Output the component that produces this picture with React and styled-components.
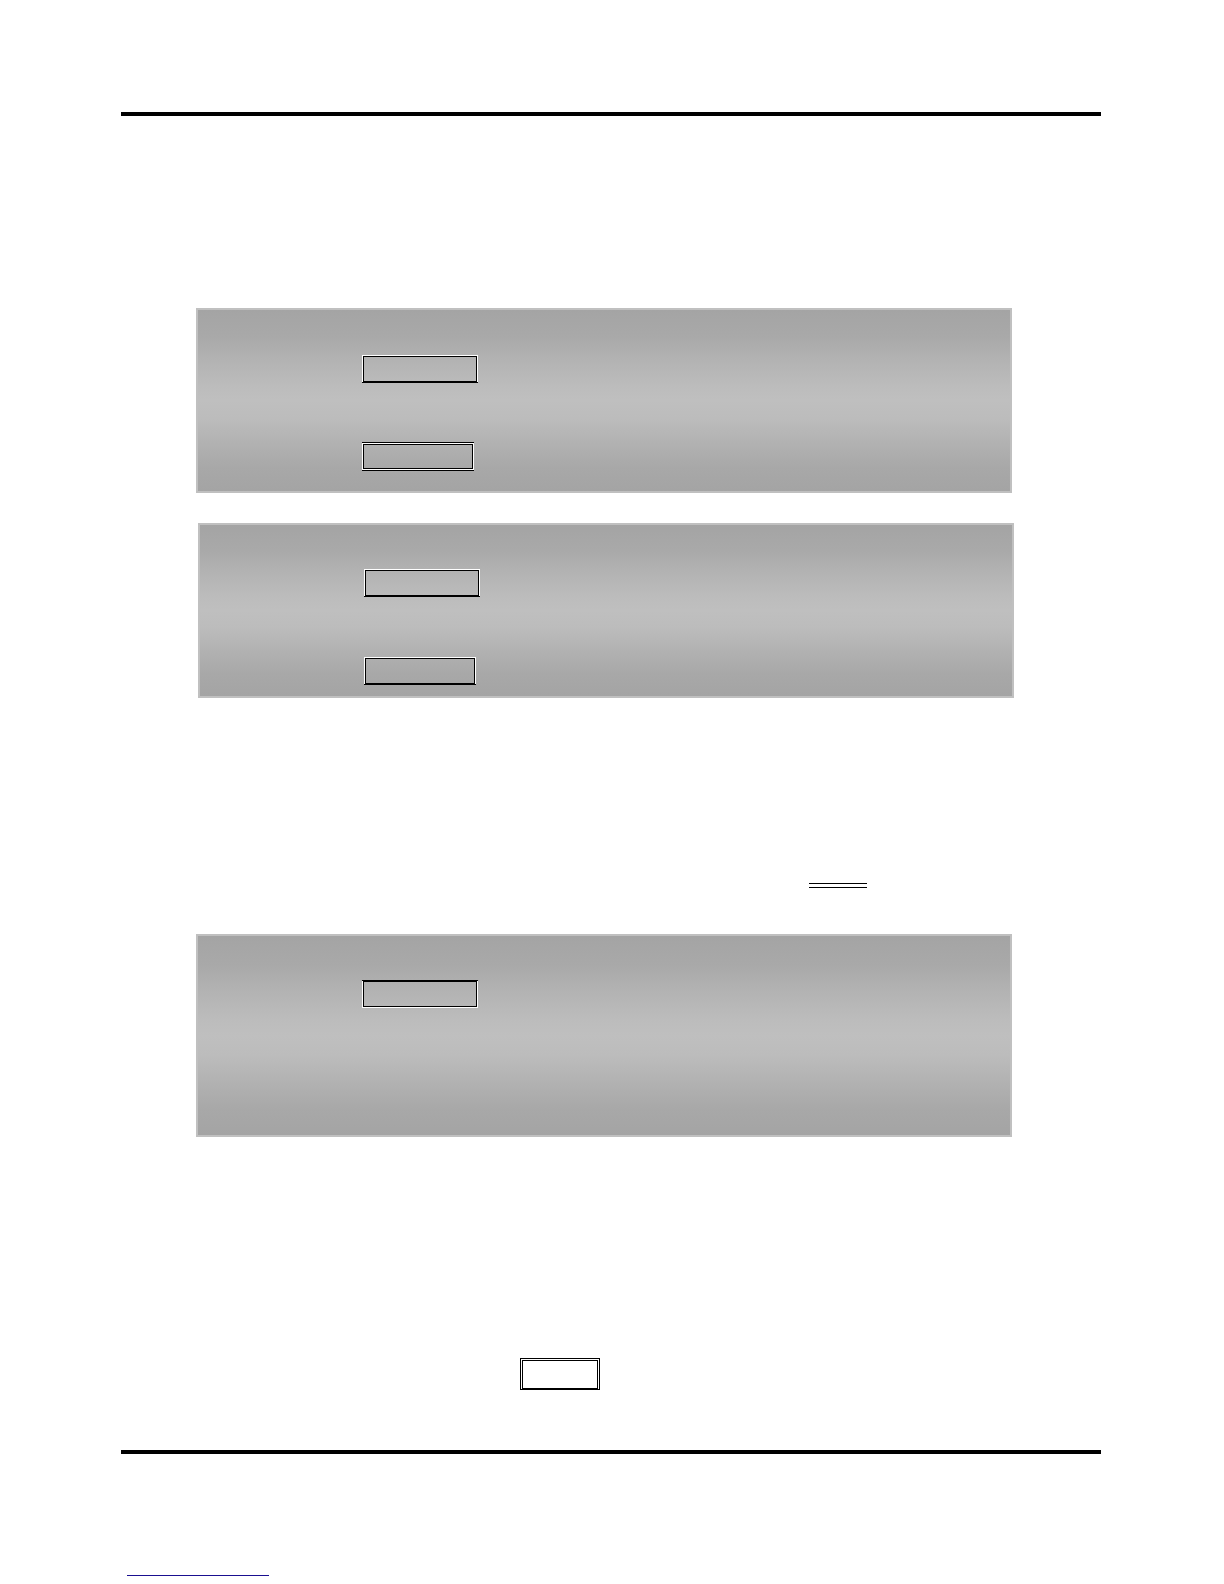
import React from "react";
import styled, { createGlobalStyle } from "styled-components";

const GlobalStyle = createGlobalStyle`
  *,
  *::before,
  *::after {
    box-sizing: border-box;
  }

  body {
    margin: 0;
    background: #fff;
    font-family: "Liberation Sans", Arial, sans-serif;
  }
`;

const Page = styled.main`
  display: flex;
  flex-direction: column;
  min-height: 100vh;
  padding: 112px 123px 8px 121px;
`;

const Rule = styled.hr`
  width: 100%;
  height: 4px;
  margin: 0;
  border: none;
  background: #000;
`;

const Notes = styled.section`
  display: flex;
  flex-direction: column;
  padding: 192px 0 60px;
`;

const Panel = styled.div`
  display: flex;
  flex-direction: column;
  gap: ${(props) => props.$gap || 0}px;
  min-height: ${(props) => props.$height}px;
  margin: 0 ${(props) => (props.$shifted ? "87px 0 77px" : "89px 0 75px")};
  padding: ${(props) => props.$top}px 164px 0;
  border: 2px solid #c0c0c0;
  background: linear-gradient(
    #a4a4a4 0%,
    #a9a9a9 15%,
    #b3b3b3 28%,
    #bcbcbc 42%,
    #bfbfbf 50%,
    #bcbcbc 60%,
    #b2b2b2 73%,
    #a8a8a8 87%,
    #a4a4a4 100%
  );

  & + & {
    margin-top: 30px;
  }
`;

// black lines above and below the white edge
const KeyFrame = styled.div`
  display: flex;
  width: ${(props) => props.$width}px;
  border: 0 solid #000;
  border-top-width: ${(props) => (props.$lineTop ? 1 : 0)}px;
  border-bottom-width: ${(props) => (props.$lineBottom ? 1 : 0)}px;
`;

const KeyEdge = styled.div`
  flex: 1;
  border: 1px solid #fff;
  border-top-width: ${(props) => (props.$top ? 1 : 0)}px;
  border-bottom-width: ${(props) => (props.$bottom ? 1 : 0)}px;
`;

const KeyFace = styled.div`
  height: ${(props) => props.$height}px;
  border: 1px solid #000;
`;

const DoubleLine = styled.div`
  width: 58px;
  height: 5px;
  margin: 185px 0 46px 688px;
  border-top: 1px solid #000;
  border-bottom: 1px solid #000;
`;

const Stamp = styled.div`
  width: 80px;
  height: 32px;
  margin: 221px 0 0 399px;
  padding: 1px 1px 0;
  border: 1px solid #000;
`;

const StampFace = styled.div`
  height: 100%;
  border: 1px solid #000;
`;

const Footer = styled.footer`
  display: flex;
  padding: 121px 6px 0;
`;

const FooterLink = styled.a`
  width: 142px;
  height: 1px;
  background: #1a0f90;
`;

function Key({ width, height = 26, lineTop, lineBottom, edgeTop, edgeBottom }) {
  return (
    <KeyFrame $width={width} $lineTop={lineTop} $lineBottom={lineBottom}>
      <KeyEdge $top={edgeTop} $bottom={edgeBottom}>
        <KeyFace $height={height} />
      </KeyEdge>
    </KeyFrame>
  );
}

function App() {
  return (
    <>
      <GlobalStyle />
      <Page>
        <Rule />
        <Notes>
          <Panel $height={185} $top={45} $gap={59}>
            <Key width={116} lineBottom edgeTop />
            <Key
              width={112}
              height={25}
              lineTop
              lineBottom
              edgeTop
              edgeBottom
            />
          </Panel>
          <Panel $height={175} $top={44} $gap={60} $shifted>
            <Key width={116} lineBottom edgeTop />
            <Key width={112} lineBottom edgeTop />
          </Panel>
          <DoubleLine />
          <Panel $height={203} $top={44}>
            <Key width={116} lineTop edgeBottom />
          </Panel>
          <Stamp>
            <StampFace />
          </Stamp>
        </Notes>
        <Rule />
        <Footer>
          <FooterLink href="#" aria-label="Website" />
        </Footer>
      </Page>
    </>
  );
}

export default App;
